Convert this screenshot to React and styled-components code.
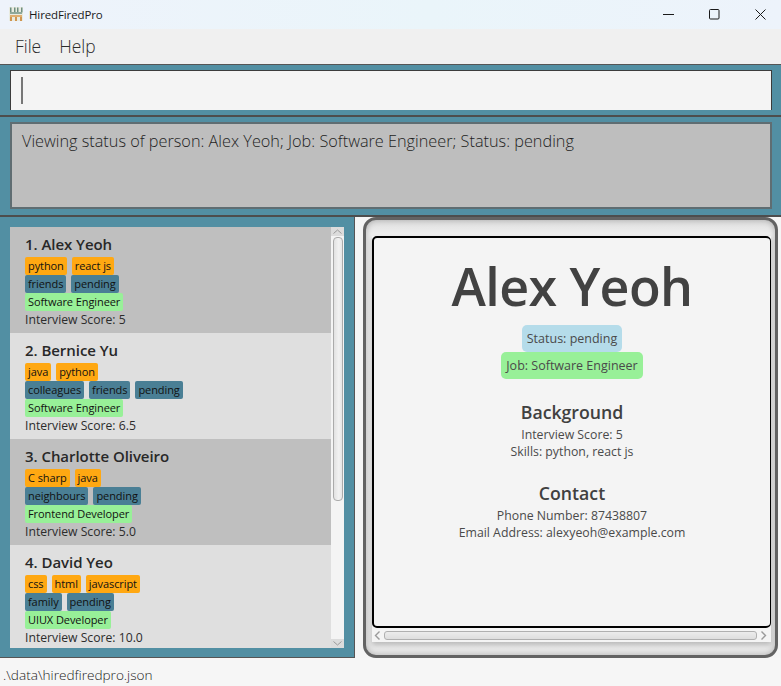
import React from "react";
import styled, { createGlobalStyle } from "styled-components";

const GlobalStyle = createGlobalStyle`
  html, body {
    margin: 0;
    padding: 0;
    background: #f5f5f5;
  }
  * { box-sizing: border-box; }
`;

const Window = styled.div`
  width: 781px;
  height: 686px;
  display: flex;
  flex-direction: column;
  overflow: hidden;
  font-family: "Open Sans", "Noto Sans", sans-serif;
  background: #f5f5f5;
`;

/* Title bar */
const TitleBar = styled.div`
  height: 29px;
  flex: none;
  display: flex;
  align-items: center;
  padding: 0 0 1px 9px;
  background: linear-gradient(90deg, #eef3fb 0%, #eaf5fa 55%, #edf3fb 100%);
`;

const AppName = styled.span`
  margin-left: 6px;
  font-size: 11.5px;
  letter-spacing: -0.12px;
  color: #1a1a1a;
`;

const WindowButtons = styled.div`
  margin: 0 -2px 0 auto;
  display: flex;
`;

const WindowButton = styled.div`
  width: 46px;
  height: 28px;
  display: flex;
  align-items: center;
  justify-content: center;
`;

/* Menu */
const MenuBar = styled.div`
  height: 36px;
  flex: none;
  display: flex;
  align-items: center;
  gap: 18px;
  padding: 0 0 1px 15px;
  background: #f0f0f0;
  border-bottom: 1px solid #555;
`;

const MenuItem = styled.span`
  font-size: 17.4px;
  font-weight: 300;
  color: #2c2c2c;
`;

/* Command box */
const CommandBand = styled.div`
  height: 52px;
  flex: none;
  padding: 5px 9px 5px 10px;
  background: #528fa3;
  border-bottom: 2px solid #4d4d4d;
`;

const CommandInput = styled.div`
  height: 40px;
  display: flex;
  align-items: center;
  padding-left: 10px;
  background: #f4f4f4;
  border-top: 1px solid #3c3c3c;
  border-left: 1px solid #3c3c3c;
  border-right: 1px solid #3c3c3c;
`;

const Caret = styled.div`
  width: 2px;
  height: 27px;
  background: #777;
`;

/* Result box */
const ResultBand = styled.div`
  height: 100px;
  flex: none;
  padding: 5px 9px 6px 10px;
  background: #528fa3;
  border-bottom: 2px solid #4d4d4d;
`;

const ResultBox = styled.div`
  height: 87px;
  padding: 6px 10px;
  background: #bebebe;
  border: 2px solid #5f6d72;
  font-size: 16.28px;
  line-height: 22px;
  font-weight: 300;
  color: #1f1f1f;
`;

/* Split area */
const Split = styled.div`
  height: 441px;
  flex: none;
  display: flex;
`;

const ListPane = styled.div`
  width: 355px;
  flex: none;
  padding: 10px 11px 9px 10px;
  background: #528fa3;
  border-right: 1px solid #555;
  border-bottom: 1px solid #555;
`;

const ListBody = styled.div`
  height: 421px;
  display: flex;
  background: #f4f4f4;
`;

const Cards = styled.div`
  width: 321px;
  flex: none;
  overflow: hidden;
`;

const Card = styled.div`
  height: 106px;
  padding: 7px 15px 0;
  background: ${(p) => (p.$odd ? "#bfbfbf" : "#dfdfdf")};
`;

const CardName = styled.div`
  height: 22px;
  font-size: 15px;
  line-height: 21px;
  font-weight: 600;
  letter-spacing: -0.05px;
  color: #282828;
`;

const TagRow = styled.div`
  height: 18px;
  display: flex;
  gap: 5px;
  margin-top: ${(p) => (p.$first ? "1px" : "0")};
`;

const Tag = styled.span`
  height: 18px;
  padding: 0 3px;
  font-size: 11px;
  line-height: 18px;
  letter-spacing: -0.08px;
  color: #111;
  border-radius: 2px;
  background: ${(p) => p.$bg};
`;

const Score = styled.div`
  font-size: 12.2px;
  line-height: 17px;
  color: #2c2c2c;
`;

const VScroll = styled.div`
  width: 13px;
  flex: none;
  display: flex;
  flex-direction: column;
  align-items: center;
  background: #f4f4f4;
`;

const VArrow = styled.div`
  width: 13px;
  height: 9px;
  flex: none;
  display: flex;
  align-items: center;
  justify-content: center;
  background: #dcdcdc;
`;

const VThumb = styled.div`
  width: 10px;
  height: 264px;
  margin-top: 1px;
  border: 1px solid #ababab;
  border-radius: 4px;
  background: linear-gradient(90deg, #e2e2e2, #f2f2f2 60%, #e6e6e6);
`;

const VSpacer = styled.div`
  flex: 1;
`;

const DetailPane = styled.div`
  flex: 1;
  padding: 0 3px 0 8px;
  background: #f5f5f5;
`;

const DetailFrame = styled.div`
  height: 441px;
  padding: 16px 4px 14px 6px;
  border: 3px solid #636363;
  border-radius: 13px;
  background: linear-gradient(180deg, #dedede 0, #eeeeee 14px, #e8e8e8 100%);
  box-shadow: inset 0 0 6px rgba(0, 0, 0, 0.25);
`;

const DetailInner = styled.div`
  height: 406px;
  display: flex;
  flex-direction: column;
  background: #f4f4f4;
  box-shadow: 0 3px 5px rgba(0, 0, 0, 0.2);
`;

const DetailCard = styled.div`
  height: 392px;
  flex: none;
  display: flex;
  flex-direction: column;
  align-items: center;
  padding-top: 12px;
  border: 2px solid #000;
  border-width: 2px 1px 2px 2px;
  border-radius: 5px;
  background: #f4f4f4;
  color: #444;
`;

const BigName = styled.div`
  margin-bottom: 3px;
  font-size: 52px;
  line-height: 72px;
  font-weight: 600;
  letter-spacing: -0.6px;
  color: #424242;
`;

const Pill = styled.div`
  height: 27px;
  padding: 0 5px;
  font-size: 12.5px;
  line-height: 27px;
  border-radius: 5px;
  color: #4a4a4a;
  background: ${(p) => p.$bg};
`;

const SectionTitle = styled.div`
  margin-top: ${(p) => p.$top}px;
  margin-bottom: 2px;
  font-size: 17.7px;
  line-height: 24px;
  font-weight: 600;
  color: #404040;
`;

const InfoLine = styled.div`
  font-size: 12.3px;
  line-height: 17px;
  color: #4a4a4a;
`;

const HScroll = styled.div`
  height: 14px;
  flex: none;
  display: flex;
  align-items: center;
  gap: 2px;
  padding: 0 3px 0 1px;
  background: #f4f4f4;
`;

const HThumb = styled.div`
  flex: 1;
  height: 9px;
  border: 1px solid #b0b0b0;
  border-radius: 3px;
  background: linear-gradient(180deg, #ececec, #dedede);
`;

const StatusBar = styled.div`
  flex: 1;
  padding: 7px 0 0 3px;
  background: #f6f6f6;
  font-size: 13.6px;
  line-height: 19px;
  font-weight: 300;
  color: #222;
`;

const ORANGE = "#ffa812";
const TEAL = "#4a7f95";
const GREEN = "#98f098";

const people = [
  { name: "Alex Yeoh", skills: ["python", "react js"], tags: ["friends", "pending"], job: "Software Engineer", score: "5" },
  { name: "Bernice Yu", skills: ["java", "python"], tags: ["colleagues", "friends", "pending"], job: "Software Engineer", score: "6.5" },
  { name: "Charlotte Oliveiro", skills: ["C sharp", "java"], tags: ["neighbours", "pending"], job: "Frontend Developer", score: "5.0" },
  { name: "David Yeo", skills: ["css", "html", "javascript"], tags: ["family", "pending"], job: "UIUX Developer", score: "10.0" },
];

const AppIcon = () => (
  <svg width="14" height="14" viewBox="0 0 14 14">
    <rect width="14" height="14" fill="#e9ebe0" />
    <rect x="1" y="0.5" width="1.5" height="5" fill="#6f8f80" />
    <rect x="5" y="0.5" width="1.5" height="5" fill="#6f8f80" />
    <rect x="8" y="0.5" width="1.5" height="5" fill="#6f8f80" />
    <rect x="12" y="0.5" width="1.5" height="5" fill="#6f8f80" />
    <rect x="1" y="5" width="12" height="2" fill="#8fa89a" />
    <rect x="1" y="8" width="12" height="2" fill="#dfae70" />
    <rect x="1" y="10" width="2" height="4" fill="#cf9550" />
    <rect x="6" y="10" width="2" height="4" fill="#cf9550" />
    <rect x="11" y="10" width="2" height="4" fill="#cf9550" />
  </svg>
);

const Chevron = ({ d }) => (
  <svg width="9" height="11" viewBox="0 0 9 11" fill="none" stroke="#9a9a9a" strokeWidth="1.4">
    <path d={d} />
  </svg>
);

const App = () => {
  return (
    <>
      <GlobalStyle />
      <Window>
        <TitleBar>
          <AppIcon />
          <AppName>HiredFiredPro</AppName>
          <WindowButtons>
            <WindowButton>
              <svg width="11" height="11" viewBox="0 0 11 11" stroke="#1a1a1a" strokeWidth="1"><path d="M0 5.5h11" /></svg>
            </WindowButton>
            <WindowButton>
              <svg width="11" height="11" viewBox="0 0 11 11" fill="none" stroke="#1a1a1a" strokeWidth="1"><rect x="0.5" y="0.5" width="9.5" height="9.5" rx="1" /></svg>
            </WindowButton>
            <WindowButton>
              <svg width="11" height="11" viewBox="0 0 11 11" stroke="#1a1a1a" strokeWidth="1"><path d="M0.5 0.5l10 10M10.5 0.5l-10 10" /></svg>
            </WindowButton>
          </WindowButtons>
        </TitleBar>
        <MenuBar>
          <MenuItem>File</MenuItem>
          <MenuItem>Help</MenuItem>
        </MenuBar>
        <CommandBand>
          <CommandInput>
            <Caret />
          </CommandInput>
        </CommandBand>
        <ResultBand>
          <ResultBox>Viewing status of person: Alex Yeoh; Job: Software Engineer; Status: pending</ResultBox>
        </ResultBand>
        <Split>
          <ListPane>
            <ListBody>
              <Cards>
                {people.map((p, i) => (
                  <Card key={p.name} $odd={i % 2 === 0}>
                    <CardName>{i + 1}. {p.name}</CardName>
                    <TagRow $first>
                      {p.skills.map((s) => <Tag key={s} $bg={ORANGE}>{s}</Tag>)}
                    </TagRow>
                    <TagRow>
                      {p.tags.map((s) => <Tag key={s} $bg={TEAL}>{s}</Tag>)}
                    </TagRow>
                    <TagRow>
                      <Tag $bg={GREEN}>{p.job}</Tag>
                    </TagRow>
                    <Score>Interview Score: {p.score}</Score>
                  </Card>
                ))}
              </Cards>
              <VScroll>
                <VArrow>
                  <svg width="9" height="5" viewBox="0 0 9 5" fill="none" stroke="#9a9a9a"><path d="M0.5 4.5l4-3.5 4 3.5" /></svg>
                </VArrow>
                <VThumb />
                <VSpacer />
                <VArrow>
                  <svg width="9" height="5" viewBox="0 0 9 5" fill="none" stroke="#9a9a9a"><path d="M0.5 0.5l4 3.5 4-3.5" /></svg>
                </VArrow>
              </VScroll>
            </ListBody>
          </ListPane>
          <DetailPane>
            <DetailFrame>
              <DetailInner>
                <DetailCard>
                  <BigName>Alex Yeoh</BigName>
                  <Pill $bg="#b5dcea">Status: pending</Pill>
                  <Pill $bg={GREEN}>Job: Software Engineer</Pill>
                  <SectionTitle $top={21}>Background</SectionTitle>
                  <InfoLine>Interview Score: 5</InfoLine>
                  <InfoLine>Skills: python, react js</InfoLine>
                  <SectionTitle $top={21}>Contact</SectionTitle>
                  <InfoLine>Phone Number: 87438807</InfoLine>
                  <InfoLine>Email Address: alexyeoh@example.com</InfoLine>
                </DetailCard>
                <HScroll>
                  <Chevron d="M6.5 1.5L2.5 5.5l4 4" />
                  <HThumb />
                  <Chevron d="M2.5 1.5l4 4-4 4" />
                </HScroll>
              </DetailInner>
            </DetailFrame>
          </DetailPane>
        </Split>
        <StatusBar>.\data\hiredfiredpro.json</StatusBar>
      </Window>
    </>
  );
};

export default App;
